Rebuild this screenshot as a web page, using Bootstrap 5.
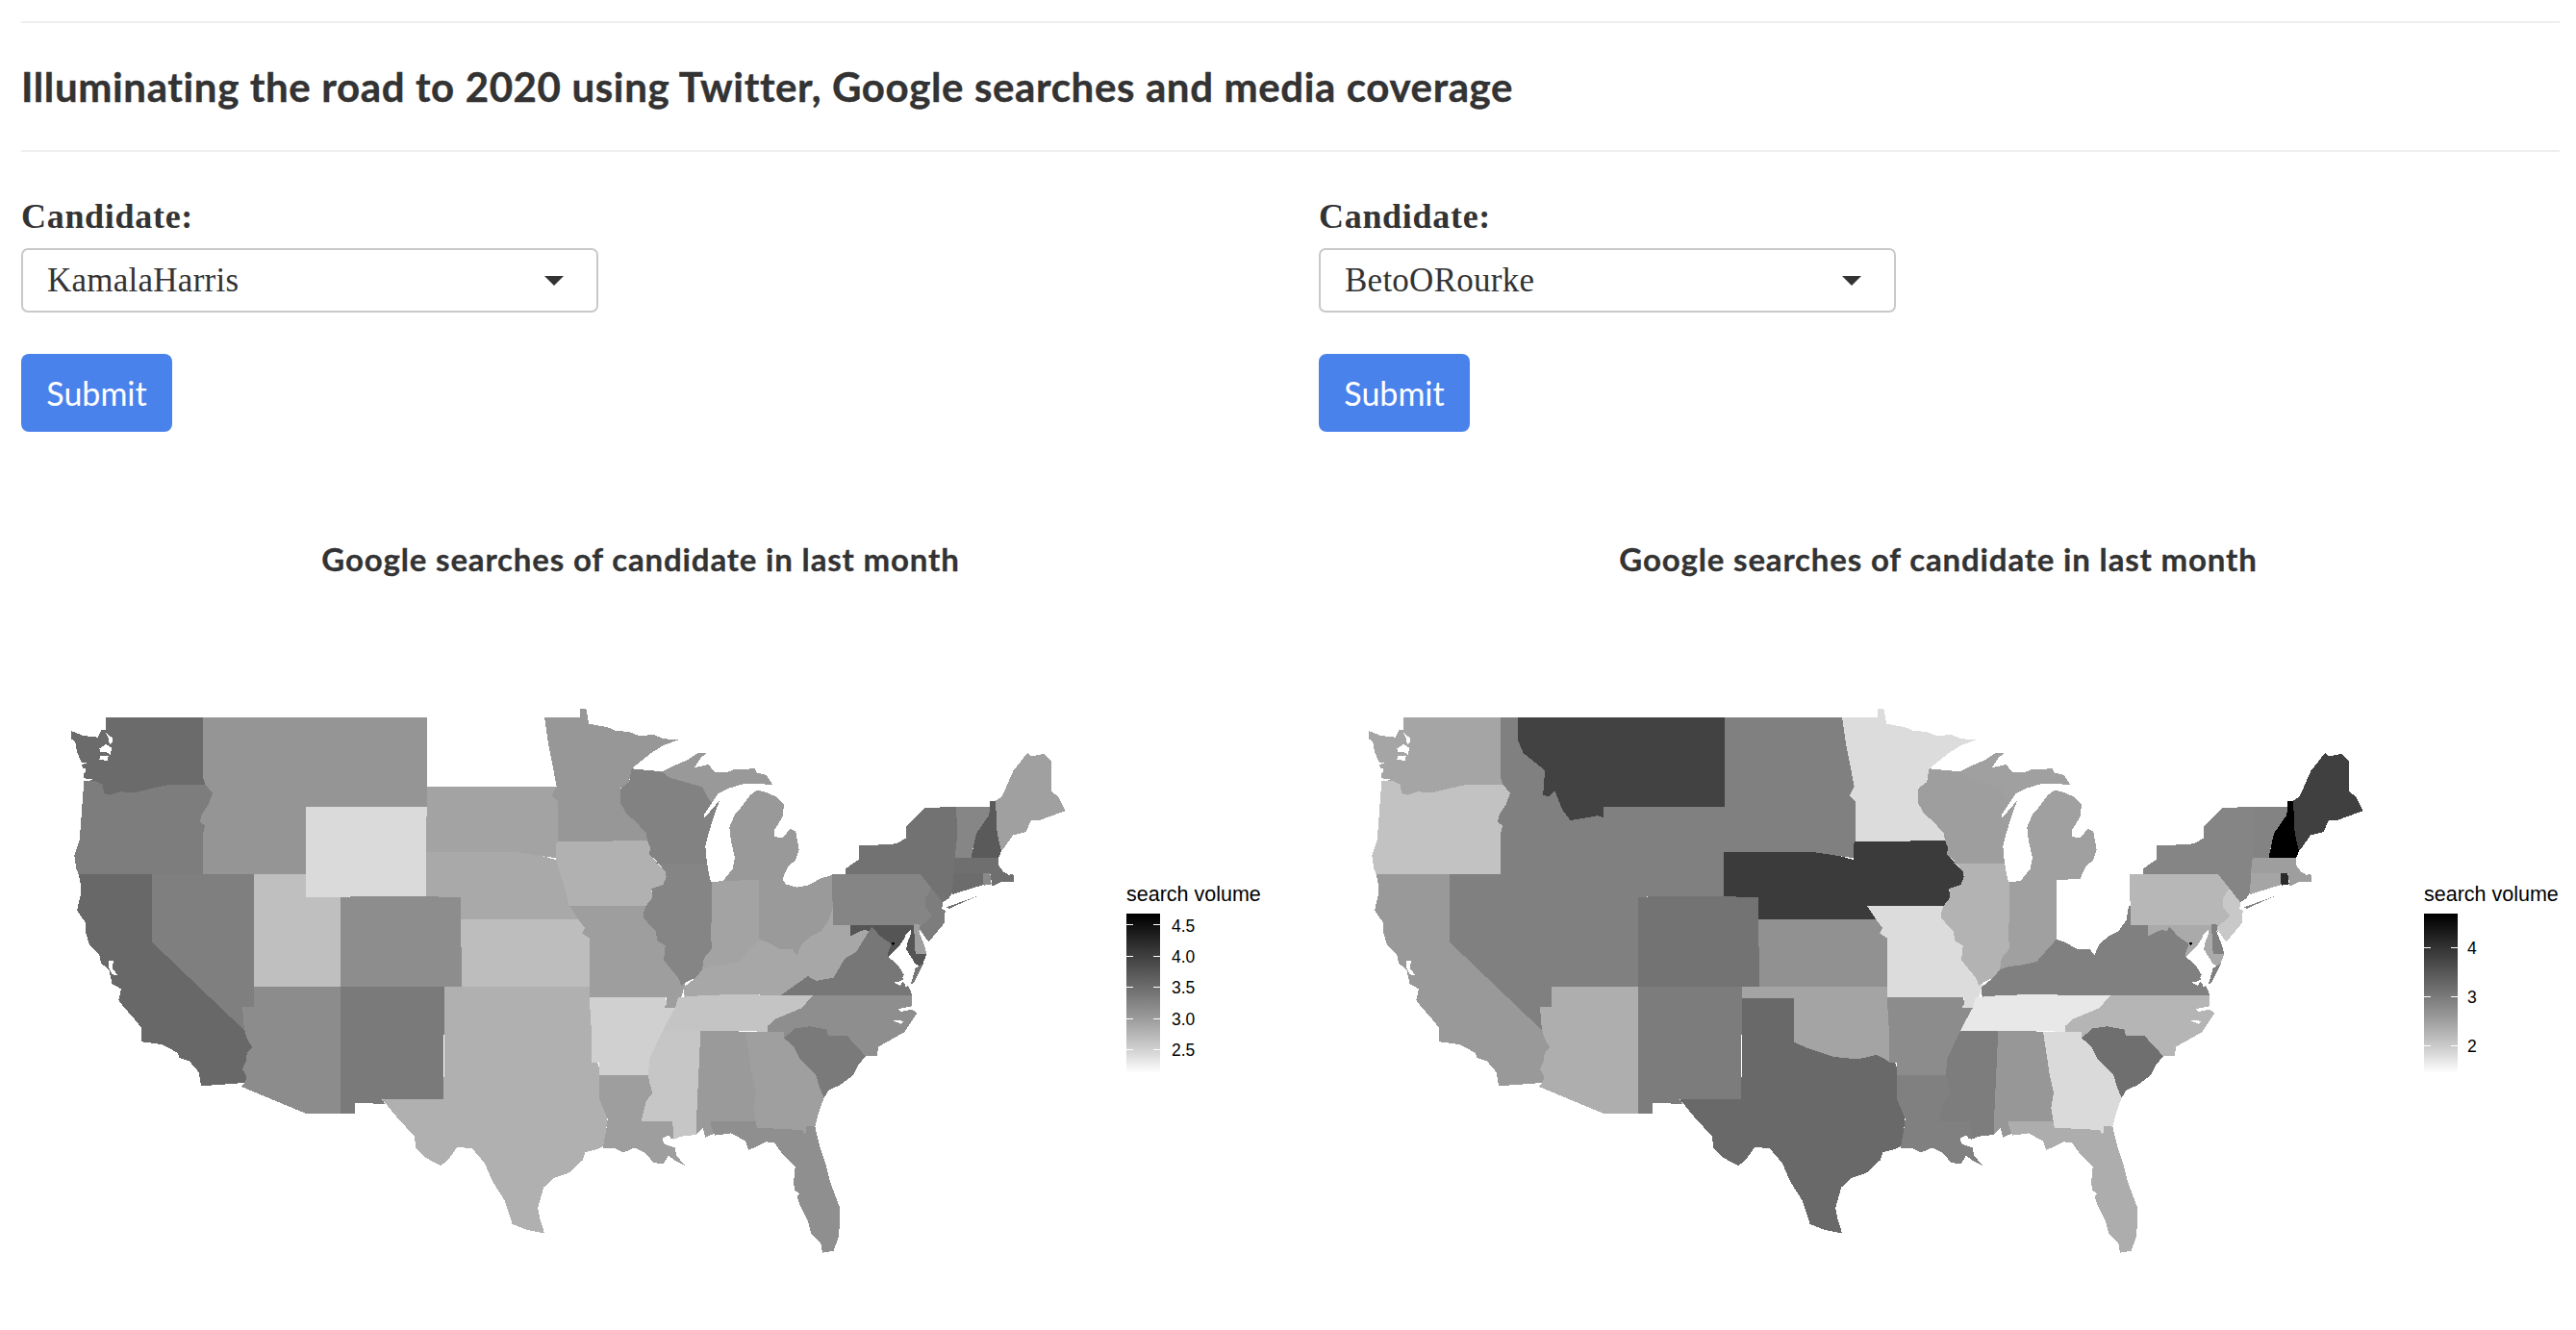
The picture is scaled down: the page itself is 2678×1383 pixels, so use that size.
<!DOCTYPE html>
<html lang="en">
<head>
<meta charset="utf-8">
<title>Illuminating the road to 2020</title>
<link href="https://cdn.jsdelivr.net/npm/bootstrap@5.3.0/dist/css/bootstrap.min.css" rel="stylesheet">
<style>
html,body{background:#fff;overflow:hidden}
body{color:#333;font-family:"Liberation Serif",serif}
.page-wrap{padding:22px 0 0 22px}
.rule{height:2px;background:#eee;border:0;opacity:1;margin:0 17px 0 0}
.app-title{height:132px;margin:0;font:700 42px/1 Lato,sans-serif;letter-spacing:.63px;color:#333;-webkit-text-stroke:.4px #333}
.pane-l{flex:0 0 1349px}
.pane-r{flex:1 1 0;min-width:0}
.cand-label{display:block;height:42px;margin:46px 0 12px;font:700 36px/42px "Liberation Serif",serif;letter-spacing:.7px;color:#333}
.cand-select{width:600px;height:67px;padding:0 25px;border:2px solid #c9c9c9;border-radius:7px;color:#333;font:400 35px/1 "Liberation Serif",serif;letter-spacing:.25px;background-image:url("data:image/svg+xml,%3Csvg xmlns='http://www.w3.org/2000/svg' width='20' height='10'%3E%3Cpath d='M0 0h20L10 10z' fill='%23333'/%3E%3C/svg%3E");background-size:20px 10px;background-position:right 34px center;box-shadow:none}
.go-btn{display:block;width:157px;height:81px;margin-top:43px;padding:0;border:0;border-radius:8px;background:#4a82ec;color:#fff;font:400 34px/81px Lato,sans-serif}
.plot-title{width:1288px;height:48px;margin:108px 0 15px;font:700 33px/48px Lato,sans-serif;letter-spacing:.84px;color:#333;text-align:center;-webkit-text-stroke:.3px #333}
.map-svg{display:block;shape-rendering:crispEdges}
.lg-title{font:400 21.5px "Liberation Sans",sans-serif;fill:#000}
.lg-tick{font:400 17.5px "Liberation Sans",sans-serif;fill:#000}
</style>
</head>
<body>
<div class="page-wrap">
  <hr class="rule">
  <h3 class="app-title d-flex align-items-center">Illuminating the road to 2020 using Twitter, Google searches and media coverage</h3>
  <hr class="rule">
  <div class="d-flex">
    <div class="pane-l">
      <label class="cand-label" for="c1">Candidate:</label>
      <select id="c1" class="form-select cand-select"><option>KamalaHarris</option></select>
      <button type="button" class="btn go-btn">Submit</button>
      <div class="plot-title">Google searches of candidate in last month</div>
      <svg class="map-svg" width="1307" height="700" viewBox="22 620 1307 700" xmlns="http://www.w3.org/2000/svg">
        <defs>
          <linearGradient id="lgd" x1="0" y1="0" x2="0" y2="1">
            <stop offset="0" stop-color="#000"/><stop offset=".05" stop-color="#0a0a0a"/><stop offset=".26" stop-color="#3e3e3e"/><stop offset=".46" stop-color="#6c6c6c"/><stop offset=".66" stop-color="#9c9c9c"/><stop offset=".85" stop-color="#d0d0d0"/><stop offset="1" stop-color="#fff"/>
          </linearGradient>
          <g id="geoW">
          <polygon id="ID" points="419,68 463,68 463,130 477,165 532,212 527,280 542,282 557,268 577,320 597,348 667,335 681,340 681,493 419,493 419,383 425,361 411,353 416,331 433,305 443,273 425,251 419,230"/>
          <polygon id="MT" points="463,68 990,68 990,310 680,312 680,340 667,335 597,348 577,320 557,268 542,282 527,280 532,212 477,165 463,130"/>
          <polygon id="WY" points="681,312 740,310 830,312 990,311 988,430 987,555 880,553 805,555 769,556 681,556"/>
          <polygon id="UT" points="549,493 681,493 681,556 769,556 769,800 549,800 550,700"/>
          <polygon id="CO" points="769,556 880,553 1076,556 1078,800 769,800"/>
          <polygon id="NM" points="769,800 1034,800 1031,1105 875,1106 882,1118 806,1116 806,1144 769,1144"/>
          <polygon id="TX" points="1034,830 1166,830 1166,950 1197,965 1267,990 1327,997 1377,985 1412,1005 1427,1008 1429,1100 1449,1160 1442,1230 1427,1240 1392,1250 1387,1270 1352,1305 1312,1320 1287,1345 1272,1400 1277,1430 1289,1470 1242,1460 1207,1445 1187,1380 1157,1330 1137,1280 1105,1240 1067,1235 1047,1265 1025,1287 987,1265 962,1240 957,1205 917,1160 875,1105 1031,1105 1034,1000"/>
          <polygon id="OK" points="1034,800 1403,800 1407,860 1412,1005 1377,985 1327,997 1267,990 1197,965 1166,950 1166,830 1034,830"/>
          <polygon id="ND" points="990,68 1289,68 1297,130 1317,240 1320,256 990,256"/>
          <polygon id="SD" points="990,256 1320,256 1308,280 1322,295 1323,405 1318,420 1318,450 1285,445 1235,437 1210,433 987,433"/>
          <polygon id="NE" points="987,433 1210,433 1235,437 1285,445 1318,455 1330,490 1350,570 1375,617 1076,617 1076,556 987,555"/>
          <polygon id="KS" points="1076,617 1375,617 1392,640 1385,655 1404,668 1404,800 1078,800"/>
          <polygon id="MN" points="1289,68 1380,68 1380,45 1395,45 1402,85 1450,95 1470,104 1503,107 1531,118 1568,115 1592,126 1629,129 1592,144 1560,165 1511,207 1504,244 1482,261 1482,300 1499,331 1519,348 1548,383 1552,403 1323,405 1322,295 1308,280 1320,256 1317,240 1297,130"/>
          <polygon id="IA" points="1320,405 1552,403 1558,422 1556,440 1597,488 1599,501 1591,523 1561,533 1564,557 1548,579 1352,580 1340,530 1318,455 1318,420"/>
          </g>
          <g id="geoC">
          <polygon id="WA" points="150,48 453,48 453,235 460,258 345,258 300,268 240,283 195,280 165,290 145,285 140,258 115,245 82,245 80,225 75,190 60,155 55,125 42,115 42,90 80,105 125,110 135,90 150,70"/>
          <polygon id="OR" points="82,245 115,245 140,258 145,285 165,290 195,280 240,283 300,268 345,258 460,258 483,283 470,320 450,350 443,375 460,385 453,410 453,537 65,537 58,520 52,480 68,430 72,380 78,300"/>
          <polygon id="CA" points="65,537 295,537 295,750 583,1025 590,1050 607,1078 590,1095 588,1120 576,1145 590,1170 582,1188 447,1198 440,1155 410,1120 380,1110 375,1095 325,1068 262,1060 260,1015 240,990 205,950 190,930 198,895 170,880 160,835 135,815 130,790 98,755 88,720 88,690 60,650 72,600 72,570"/>
          <polygon id="NV" points="295,537 612,537 612,950 577,950 578,990 583,1025 295,750"/>
          <polygon id="AZ" points="612,888 882,888 882,1283 772,1283 573,1200 582,1188 590,1170 576,1145 588,1120 590,1095 607,1078 590,1050 583,1025 578,990 577,950 612,950"/>
          </g>
          <g id="geoA">
          <polygon id="MO" points="-144,546 95,545 88,565 88,585 125,625 130,655 155,670 150,715 195,770 218,785 205,830 190,865 150,865 160,832 -81,832 -81,647 -104,632 -96,615 -116,588"/>
          <polygon id="AR" points="-82,832 155,832 160,850 150,865 185,865 160,910 135,960 105,1025 102,1075 -50,1075 -52,1035 -75,1035 -75,940"/>
          <polygon id="LA" points="-52,1075 102,1075 105,1095 115,1130 95,1155 80,1218 178,1218 180,1250 195,1270 145,1278 155,1290 185,1300 190,1325 215,1355 185,1340 165,1325 150,1350 120,1348 90,1315 60,1300 25,1315 -5,1302 -40,1302 -30,1250 -25,1210 -50,1150"/>
          <polygon id="TN" points="195,832 273,822 615,825 580,865 500,898 475,920 473,938 265,935 147,936 160,910 185,865"/>
          <polygon id="MS" points="147,936 265,935 252,1215 252,1260 205,1265 180,1275 178,1218 80,1218 95,1155 115,1130 105,1095 102,1075 105,1025 135,960"/>
          <polygon id="AL" points="265,935 405,938 425,1070 438,1130 430,1175 438,1218 295,1218 300,1240 310,1255 280,1268 272,1240 252,1260 252,1215"/>
          <polygon id="GA" points="405,938 525,940 525,958 555,985 575,1025 625,1075 635,1110 650,1145 635,1185 622,1235 595,1232 592,1260 580,1245 440,1238 430,1175 438,1130 425,1070"/>
          <polygon id="FL" points="295,1218 438,1218 440,1238 580,1245 592,1260 595,1232 622,1235 635,1290 655,1350 670,1410 700,1490 700,1530 695,1580 680,1622 645,1628 640,1600 610,1570 600,1530 575,1480 560,1435 555,1410 560,1360 520,1320 495,1285 470,1282 415,1308 405,1280 360,1255 310,1262 300,1240"/>
          <polygon id="SC" points="525,958 560,928 605,922 660,932 662,950 720,950 780,1015 755,1045 740,1075 700,1105 665,1120 650,1145 635,1110 625,1075 575,1025 555,985"/>
          <polygon id="NC" points="615,825 925,825 925,870 940,880 900,940 865,960 820,985 815,1015 780,1015 720,950 662,950 660,932 605,922 560,928 525,958 525,940 473,938 475,920 500,898 580,865"/>
          <polygon id="VA" points="515,825 550,800 600,765 625,780 680,770 715,710 750,690 790,625 800,612 825,640 860,665 850,690 850,705 880,730 905,770 890,780 915,800 925,825"/>
          <polygon id="WV" points="565,700 580,665 610,640 640,625 665,590 672,545 679,545 679,605 732,605 732,640 775,620 790,625 750,690 715,710 680,770 625,780 600,765 575,730"/>
          <polygon id="KY" points="215,830 212,800 250,770 270,745 300,735 340,730 385,720 420,680 447,650 475,660 510,680 550,680 565,700 575,730 600,765 550,800 515,825 380,822 272,825"/>
          <polygon id="OH" points="447,465 520,462 530,478 565,488 600,482 640,460 675,450 678,545 672,570 665,590 640,625 610,640 580,665 565,700 550,680 510,680 475,660 447,650"/>
          <polygon id="IN" points="300,472 335,468 447,465 447,650 420,680 385,720 340,730 300,735 270,745 275,710 300,680 298,650"/>
          <polygon id="IL" points="130,408 285,413 295,465 300,472 298,650 300,680 275,710 270,745 250,770 218,785 205,795 195,770 150,715 155,670 130,655 125,625 88,585 88,565 95,545 115,520 112,492 148,480 158,455 155,440"/>
          <polygon id="WI" points="50,118 125,125 150,130 165,145 270,175 285,205 300,225 275,262 278,270 305,240 325,215 305,270 290,320 280,360 285,413 125,413 130,408 105,385 108,365 100,343 95,320 60,280 35,260 15,225 15,180 42,160"/>
          <polygon id="MI" points="335,468 365,430 372,395 360,345 355,300 372,260 390,240 420,200 440,185 465,190 500,205 525,230 520,270 495,310 495,330 520,335 545,305 562,315 572,370 560,405 540,420 520,462 447,465"/>
          <polygon id="UP" points="125,125 150,125 175,112 225,90 255,70 285,68 265,85 245,115 290,105 310,130 345,130 370,120 435,118 440,130 470,138 490,168 440,165 400,165 350,180 320,195 300,225 285,205 270,175 165,145 150,130"/>
          <polygon id="PA" points="675,447 950,447 985,490 965,525 965,550 988,575 975,590 955,605 678,605"/>
          <polygon id="NY" points="717,447 717,430 760,400 758,358 830,355 875,352 905,335 905,300 940,265 965,240 1062,237 1068,320 1058,420 1052,500 1040,522 1020,535 985,490 950,447"/>
          <polygon id="LI" points="1032,550 1135,513 1090,532 1040,555"/>
          <polygon id="VT" points="1062,237 1168,237 1165,262 1125,320 1108,397 1058,397 1066,320"/>
          <polygon id="NH" points="1168,218 1185,218 1190,320 1203,375 1195,395 1108,398 1125,320 1165,262"/>
          <polygon id="ME" points="1185,218 1205,205 1240,125 1285,68 1295,80 1335,72 1360,95 1360,190 1380,205 1403,250 1345,270 1320,280 1295,280 1280,315 1240,325 1215,360 1203,375 1190,320"/>
          <polygon id="MA" points="1058,397 1195,395 1195,420 1210,440 1228,450 1240,445 1243,470 1205,470 1175,485 1168,445 1053,445"/>
          <polygon id="CT" points="1053,445 1145,445 1148,480 1050,510"/>
          <polygon id="RI" points="1145,445 1168,445 1172,478 1148,482"/>
          <polygon id="NJ" points="985,490 1020,535 1018,555 1028,560 1025,600 975,660 960,635 945,615 955,605 975,590 988,575 965,550 965,525"/>
          <polygon id="DE" points="930,603 950,605 948,620 970,695 935,695"/>
          <polygon id="MD" points="732,605 930,605 935,695 970,697 955,735 935,728 918,700 905,680 905,640 885,670 850,705 850,690 860,665 825,640 800,612 790,625 775,620 732,640"/>
          <polygon id="VS" points="920,792 935,740 960,725 930,785"/>
          <polygon id="DC" points="860,658 870,661 868,669 860,665"/>
          </g>
          <g id="wetC" fill="#fff">
            <polygon points="128,72 148,68 150,88 132,86"/>
            <polygon points="150,95 170,112 172,125 162,132 158,112"/>
            <polygon points="130,145 150,132 168,142 165,165 150,155 134,158"/>
            <polygon points="132,168 158,168 155,183 130,180"/>
            <polygon points="72,188 90,190 76,196"/>
            <polygon points="76,205 88,208 84,224 78,222"/>
            <polygon points="80,238 112,240 100,246 80,246"/>
            <polygon points="160,808 174,808 170,830 188,853 170,850 160,830"/>
          </g>
          <g id="wetA" fill="#fff">
            <polygon points="905,635 920,622 920,635 910,660 905,690 915,715 920,745 915,790 905,800 895,770 905,750 900,720 865,705 890,720 895,680"/>
            <polygon points="942,615 960,645 982,660 972,690 955,650"/>
            <polygon points="880,868 930,858 932,868 890,876"/>
            <polygon points="865,903 900,905 890,915"/>
            <polygon points="868,784 895,780 888,795"/>
            <polygon points="925,820 930,820 946,882 938,882"/>
            <polygon points="265,1278 280,1272 295,1282 272,1290"/>
            <polygon points="145,1272 165,1262 185,1285 155,1287"/>
            <polygon points="555,1430 575,1445 565,1452 552,1440"/>
            <polygon points="1195,490 1215,490 1200,495"/>
            <polygon points="1022,550 1135,505 1140,513 1032,552"/>
          </g>
        </defs>
        <g transform="translate(40 720) scale(.40816 .38265)">
          <use href="#ID" fill="#959595"/><use href="#MT" fill="#959595"/><use href="#WY" fill="#dadada"/><use href="#UT" fill="#bfbfbf"/><use href="#CO" fill="#8d8d8d"/><use href="#NM" fill="#7a7a7a"/><use href="#TX" fill="#b0b0b0"/><use href="#OK" fill="#b0b0b0"/><use href="#SD" fill="#a3a3a3"/><use href="#NE" fill="#a9a9a9"/><use href="#KS" fill="#bdbdbd"/><use href="#MN" fill="#979797"/><use href="#IA" fill="#b1b1b1"/>
        </g>
        <g transform="translate(60 730) scale(.33333)">
          <use href="#WA" fill="#6b6b6b"/><use href="#OR" fill="#7d7d7d"/><use href="#CA" fill="#686868"/><use href="#NV" fill="#7f7f7f"/><use href="#AZ" fill="#8c8c8c"/><use href="#wetC"/>
        </g>
        <g transform="translate(640 760) scale(.33333)">
          <use href="#MO" fill="#9e9e9e"/><use href="#AR" fill="#d0d0d0"/><use href="#LA" fill="#9e9e9e"/><use href="#TN" fill="#c4c4c4"/><use href="#MS" fill="#c6c6c6"/><use href="#AL" fill="#9a9a9a"/><use href="#GA" fill="#9f9f9f"/><use href="#FL" fill="#8f8f8f"/><use href="#SC" fill="#7a7a7a"/><use href="#NC" fill="#8e8e8e"/><use href="#VA" fill="#777"/><use href="#WV" fill="#a7a7a7"/><use href="#KY" fill="#a7a7a7"/><use href="#OH" fill="#9a9a9a"/><use href="#IN" fill="#a3a3a3"/><use href="#IL" fill="#858585"/><use href="#WI" fill="#828282"/><use href="#MI" fill="#999"/><use href="#UP" fill="#999"/><use href="#PA" fill="#858585"/><use href="#NY" fill="#727272"/><use href="#VT" fill="#868686"/><use href="#NH" fill="#5a5a5a"/><use href="#ME" fill="#a0a0a0"/><use href="#MA" fill="#6f6f6f"/><use href="#CT" fill="#6c6c6c"/><use href="#RI" fill="#8a8a8a"/><use href="#NJ" fill="#7d7d7d"/><use href="#DE" fill="#9f9f9f"/><use href="#MD" fill="#555"/><use href="#VS" fill="#777"/><use href="#DC" fill="#000"/>
          <use href="#wetA"/><use href="#LI" fill="#727272"/>
        </g>
        <text class="lg-title" x="1171" y="937">search volume</text>
        <rect x="1171" y="950" width="35" height="166" fill="url(#lgd)"/>
        <g fill="#fff"><rect x="1171" y="961" width="7" height="1"/><rect x="1199" y="961" width="7" height="1"/><rect x="1171" y="994" width="7" height="1"/><rect x="1199" y="994" width="7" height="1"/><rect x="1171" y="1026" width="7" height="1"/><rect x="1199" y="1026" width="7" height="1"/><rect x="1171" y="1059" width="7" height="1"/><rect x="1199" y="1059" width="7" height="1"/><rect x="1171" y="1091" width="7" height="1"/><rect x="1199" y="1091" width="7" height="1"/></g>
        <text class="lg-tick" x="1218" y="969">4.5</text><text class="lg-tick" x="1218" y="1001">4.0</text><text class="lg-tick" x="1218" y="1033">3.5</text><text class="lg-tick" x="1218" y="1066">3.0</text><text class="lg-tick" x="1218" y="1098">2.5</text>
      </svg>
    </div>
    <div class="pane-r">
      <label class="cand-label" for="c2">Candidate:</label>
      <select id="c2" class="form-select cand-select"><option>BetoORourke</option></select>
      <button type="button" class="btn go-btn">Submit</button>
      <div class="plot-title">Google searches of candidate in last month</div>
      <svg class="map-svg" width="1307" height="700" viewBox="22 620 1307 700" xmlns="http://www.w3.org/2000/svg">
        <g transform="translate(40 720) scale(.40816 .38265)">
          <use href="#ID" fill="#808080"/><use href="#MT" fill="#424242"/><use href="#WY" fill="#808080"/><use href="#UT" fill="#808080"/><use href="#CO" fill="#737373"/><use href="#NM" fill="#7c7c7c"/><use href="#TX" fill="#696969"/><use href="#OK" fill="#a4a4a4"/><use href="#ND" fill="#808080"/><use href="#SD" fill="#808080"/><use href="#NE" fill="#3b3b3b"/><use href="#KS" fill="#919191"/><use href="#MN" fill="#dcdcdc"/><use href="#IA" fill="#3b3b3b"/>
        </g>
        <g transform="translate(60 730) scale(.33333)">
          <use href="#WA" fill="#a5a5a5"/><use href="#OR" fill="#c2c2c2"/><use href="#CA" fill="#999"/><use href="#NV" fill="#808080"/><use href="#AZ" fill="#aeaeae"/><use href="#wetC"/>
        </g>
        <g transform="translate(640 760) scale(.33333)">
          <use href="#MO" fill="#dcdcdc"/><use href="#AR" fill="#8c8c8c"/><use href="#LA" fill="#808080"/><use href="#TN" fill="#e8e8e8"/><use href="#MS" fill="#7d7d7d"/><use href="#AL" fill="#979797"/><use href="#GA" fill="#dadada"/><use href="#FL" fill="#adadad"/><use href="#SC" fill="#6f6f6f"/><use href="#NC" fill="#b5b5b5"/><use href="#VA" fill="#808080"/><use href="#WV" fill="#808080"/><use href="#KY" fill="#808080"/><use href="#IN" fill="#a0a0a0"/><use href="#IL" fill="#b3b3b3"/><use href="#WI" fill="#9e9e9e"/><use href="#MI" fill="#a0a0a0"/><use href="#UP" fill="#a0a0a0"/><use href="#PA" fill="#b7b7b7"/><use href="#NY" fill="#858585"/><use href="#VT" fill="#838383"/><use href="#NH" fill="#000"/><use href="#ME" fill="#404040"/><use href="#MA" fill="#9e9e9e"/><use href="#CT" fill="#a5a5a5"/><use href="#RI" fill="#2a2a2a"/><use href="#NJ" fill="#c8c8c8"/><use href="#DE" fill="#808080"/><use href="#MD" fill="#aaa"/><use href="#VS" fill="#808080"/><use href="#DC" fill="#000"/>
          <use href="#wetA"/><use href="#LI" fill="#858585"/>
        </g>
        <text class="lg-title" x="1171" y="937">search volume</text>
        <rect x="1171" y="950" width="35" height="166" fill="url(#lgd)"/>
        <g fill="#fff"><rect x="1171" y="985" width="7" height="1"/><rect x="1199" y="985" width="7" height="1"/><rect x="1171" y="1036" width="7" height="1"/><rect x="1199" y="1036" width="7" height="1"/><rect x="1171" y="1087" width="7" height="1"/><rect x="1199" y="1087" width="7" height="1"/></g>
        <text class="lg-tick" x="1216" y="992">4</text><text class="lg-tick" x="1216" y="1043">3</text><text class="lg-tick" x="1216" y="1094">2</text>
      </svg>
    </div>
  </div>
</div>
<script src="https://cdn.jsdelivr.net/npm/bootstrap@5.3.0/dist/js/bootstrap.bundle.min.js"></script>
</body>
</html>
